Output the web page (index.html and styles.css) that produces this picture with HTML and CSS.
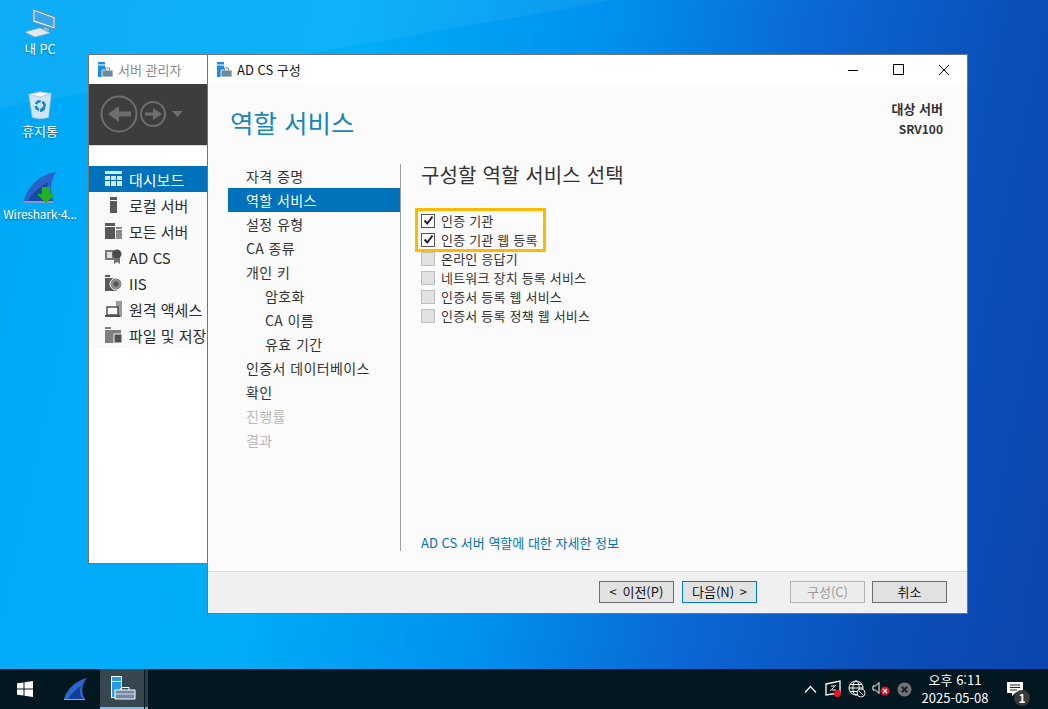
FILE: index.html
```html
<!DOCTYPE html>
<html lang="ko">
<head>
<meta charset="utf-8">
<title>AD CS 구성</title>
<link rel="stylesheet" href="styles.css">
</head>
<body>
<main class="desktop">
  <div class="desk-icon pc">
    <svg width="40" height="29" viewBox="0 0 40 29"><path d="M13 1 35 9 35 21 13 14Z" fill="#e8eef2" stroke="#7f8e9a"/><path d="M14.500 3 33.500 10 33.500 19 14.500 12.500Z" fill="#3aa6e8"/><path d="M24 19 29 21 29 23 24 22Z" fill="#aab4bc"/><path d="M5 24 20 20 30 25 15 29Z" fill="#e4e8ec" stroke="#a8b0b8" stroke-width=".7"/></svg>
    <span>내 PC</span>
  </div>
  <div class="desk-icon bin">
    <svg width="26" height="29" viewBox="0 0 30 34"><path d="M2 4 28 3 25 31Q15 34 6 31Z" fill="#cfe7f5" stroke="#a9c4d6"/><path d="M2 4 15 1 28 3 15 7Z" fill="#f2f8fc" stroke="#a9c4d6"/><path d="M15 12a5 5 0 1 0 5 6M15 23a5 5 0 0 0 0-11" fill="none" stroke="#1c84d0" stroke-width="3" stroke-dasharray="6 2"/></svg>
    <span>휴지통</span>
  </div>
  <div class="desk-icon ws">
    <svg width="34" height="34" viewBox="0 0 34 34"><path d="M1 30C5 14 18 3 33 1 27 10 27 22 31 30Z" fill="#2b62c8"/><path d="M5 30C10 21 18 15 25 11 23 19 25 25 29 30Z" fill="#174aa4"/><path d="M1 30H31L30 32H0Z" fill="#7e9cc4"/><path d="M19 16H27V23H32L23 32 14 23H19Z" fill="#1fb41f"/></svg>
    <span>Wireshark-4...</span>
  </div>

  <section class="server-window">
    <header class="sw-title">
      <svg class="app-mark" width="15" height="15" viewBox="0 0 15 15"><use href="#mark"/></svg>
      <span>서버 관리자</span>
    </header>
    <div class="sw-toolbar">
      <svg width="90" height="40" viewBox="0 0 90 40"><g fill="none" stroke="#6e6e6e" stroke-width="2"><circle cx="19" cy="19" r="17.500"/><circle cx="53" cy="19" r="12"/></g><path d="M31 16.500H19V11L8 19 19 27V21.500H31Z" fill="#6e6e6e"/><path d="M45 17.500H53V13L62 19 53 25V20.500H45Z" fill="#6e6e6e"/><path d="M72 16H83L77.500 22Z" fill="#6e6e6e"/></svg>
    </div>
    <nav class="sw-nav">
      <a class="sw-item on"><svg width="17" height="16" viewBox="0 0 17 16"><path d="M0 0H17V3H0ZM0 5H5V9H0ZM6 5H11V9H6ZM12 5H17V9H12ZM0 10H5V15H0ZM6 10H11V15H6ZM12 10H17V15H12Z" fill="#d6e8f6"/></svg><span>대시보드</span></a>
      <a class="sw-item"><svg width="17" height="16" viewBox="0 0 17 16"><path d="M5 0H12V3H5ZM5 4H12V16H5Z" fill="#595959"/></svg><span>로컬 서버</span></a>
      <a class="sw-item"><svg width="17" height="16" viewBox="0 0 17 16"><path d="M0 0H10V3H0ZM0 4H10V16H0Z" fill="#595959"/><path d="M11 4H17V6H11ZM11 7H17V16H11Z" fill="#8a8a8a"/></svg><span>모든 서버</span></a>
      <a class="sw-item"><svg width="17" height="16" viewBox="0 0 17 16"><path d="M0 1H9V11H0Z" fill="#777"/><path d="M2 3H7V9H2Z" fill="#ddd"/><circle cx="12" cy="5" r="4.500" fill="#4a4a4a"/><path d="M9 9V15L12 13 15 15V9Z" fill="#707070"/></svg><span>AD CS</span></a>
      <a class="sw-item"><svg width="17" height="16" viewBox="0 0 17 16"><path d="M0 0H5V2H0ZM0 3H12V16H0Z" fill="#595959"/><circle cx="11" cy="9" r="6" fill="#8a8a8a" stroke="#f8f8f8"/><circle cx="11" cy="9" r="2.500" fill="#555"/></svg><span>IIS</span></a>
      <a class="sw-item"><svg width="17" height="16" viewBox="0 0 17 16"><path d="M11 0H17V16H11Z" fill="#9a9a9a"/><path d="M2 6H13V14H2Z" fill="#fafafa" stroke="#4f4f4f" stroke-width="1.500"/><path d="M0 14H15V16H0Z" fill="#4f4f4f"/></svg><span>원격 액세스</span></a>
      <a class="sw-item"><svg width="17" height="16" viewBox="0 0 17 16"><path d="M0 0H6V2H0ZM0 3H16V16H0Z" fill="#808080"/><path d="M9 7H17V16H9Z" fill="#4f4f4f" stroke="#f8f8f8"/></svg><span>파일 및 저장소</span></a>
    </nav>
  </section>

  <section class="dialog">
    <header class="dlg-title">
      <svg class="app-mark" width="15" height="15" viewBox="0 0 15 15"><use href="#mark"/></svg>
      <span class="dlg-name">AD CS 구성</span>
      <div class="winctl">
        <svg width="12" height="12" viewBox="0 0 12 12"><path d="M0 6.500H10" stroke="#000"/></svg>
        <svg width="12" height="12" viewBox="0 0 12 12"><path d="M.5 .5H10.500V10.500H.5Z" fill="none" stroke="#000"/></svg>
        <svg width="12" height="12" viewBox="0 0 12 12"><path d="M1 1 11 11M11 1 1 11" stroke="#000"/></svg>
      </div>
    </header>
    <div class="dlg-body">
      <div class="dlg-head">
        <h1>역할 서비스</h1>
        <div class="target"><b>대상 서버</b><b class="latin">SRV100</b></div>
      </div>
      <div class="dlg-main">
        <nav class="steps">
          <a>자격 증명</a>
          <a class="on">역할 서비스</a>
          <a>설정 유형</a>
          <a>CA 종류</a>
          <a>개인 키</a>
          <a class="sub">암호화</a>
          <a class="sub">CA 이름</a>
          <a class="sub">유효 기간</a>
          <a>인증서 데이터베이스</a>
          <a>확인</a>
          <a class="off">진행률</a>
          <a class="off">결과</a>
        </nav>
        <div class="panel">
          <h2>구성할 역할 서비스 선택</h2>
          <div class="checks">
            <div class="highlight"></div>
            <label class="chk"><i class="box on"><svg width="11" height="11" viewBox="0 0 11 11"><path d="M1.500 5.500 4.300 8.500 9.500 1.500" fill="none" stroke="#222" stroke-width="2"/></svg></i>인증 기관</label>
            <label class="chk"><i class="box on"><svg width="11" height="11" viewBox="0 0 11 11"><path d="M1.500 5.500 4.300 8.500 9.500 1.500" fill="none" stroke="#222" stroke-width="2"/></svg></i>인증 기관 웹 등록</label>
            <label class="chk"><i class="box"></i>온라인 응답기</label>
            <label class="chk"><i class="box"></i>네트워크 장치 등록 서비스</label>
            <label class="chk"><i class="box"></i>인증서 등록 웹 서비스</label>
            <label class="chk"><i class="box"></i>인증서 등록 정책 웹 서비스</label>
          </div>
          <a class="more">AD CS 서버 역할에 대한 자세한 정보</a>
        </div>
      </div>
    </div>
    <footer class="dlg-foot">
      <button class="btn wide">&lt; 이전(P)</button>
      <button class="btn next wide">다음(N) &gt;</button>
      <button class="btn dis">구성(C)</button>
      <button class="btn">취소</button>
    </footer>
  </section>

  <footer class="taskbar">
    <div class="tb-start"><svg width="16" height="16" viewBox="0 0 16 16"><path d="M0 2.300 6.500 1.400V7.500H0ZM7.500 1.300 16 0V7.500H7.500ZM0 8.500H6.500V14.600L0 13.700ZM7.500 8.500H16V16L7.500 14.700Z" fill="#fff"/></svg></div>
    <div class="tb-app"><svg width="24" height="24" viewBox="0 0 24 24"><path d="M1 22C4 12 12 4 24 1 18 8 18 16 22 22Z" fill="#2c66cc"/><path d="M5 22C9 16 13 12 18 9 16 14 17 18 20 22Z" fill="#123f9a"/><path d="M1 22H22V23H1Z" fill="#8fa6c4"/></svg></div>
    <div class="tb-app active"><svg width="25" height="24" viewBox="0 0 25 24"><path d="M0 0H11V22H0Z" fill="#fff"/><path d="M1 1H10V5H1ZM1 6H10V21H1Z" fill="#2a9be8"/><path d="M4 14H24V23H4Z" fill="#6f8ba3" stroke="#fff"/><path d="M10 14V11.500H18V14" fill="none" stroke="#fff"/><path d="M4 18H24" stroke="#fff" stroke-width=".7"/></svg></div>
    <div class="tb-grip"></div>
    <div class="tb-tray">
      <svg class="t-chev" width="13" height="8" viewBox="0 0 13 8"><path d="M1 7.500 6.500 1.500 12 7.500" fill="none" stroke="#fff" stroke-width="1.200"/></svg>
      <svg width="17" height="18" viewBox="0 0 17 18"><path d="M1 4 15 1V13L1 15Z" fill="none" stroke="#fff" stroke-width="1.300"/><path d="M5 11 11 5M6 6H10M7 10H11" stroke="#fff"/><circle cx="12.500" cy="13.500" r="3.500" fill="#e81123"/></svg>
      <svg width="18" height="18" viewBox="0 0 18 18"><g fill="none" stroke="#fff"><circle cx="8" cy="8" r="7"/><ellipse cx="8" cy="8" rx="3.200" ry="7"/><path d="M1 8H15M2 4.500H14M2 11.500H14"/></g><circle cx="13" cy="13" r="4" fill="#0b1a24" stroke="#ddd"/><path d="M10.500 10.500 15.500 15.500" stroke="#ddd"/></svg>
      <svg width="19" height="18" viewBox="0 0 19 18"><path d="M1 6H3.500L7 2.500V13.500L3.500 10H1Z" fill="none" stroke="#fff"/><circle cx="13" cy="11" r="4.500" fill="#e81123"/><path d="M11 9 15 13M15 9 11 13" stroke="#fff" stroke-width="1.200"/></svg>
      <svg width="15" height="15" viewBox="0 0 15 15"><circle cx="7.500" cy="7.500" r="7" fill="#6f7478"/><path d="M4.800 4.800 10.200 10.200M10.200 4.800 4.800 10.200" stroke="#1a2228" stroke-width="2"/></svg>
    </div>
    <div class="tb-clock"><span>오후 6:11</span><span>2025-05-08</span></div>
    <div class="tb-notify">
      <svg width="17" height="15" viewBox="0 0 17 15"><path d="M0 0H16V11H8L5 14V11H0Z" fill="#fff"/><path d="M3 3H13M3 5.500H13M3 8H10" stroke="#222"/></svg>
      <em>1</em>
    </div>
  </footer>
</main>
<svg class="defs" width="0" height="0"><defs><g id="mark"><path d="M0 0H7V2.500H0Z" fill="#1b8ce0"/><path d="M0 3.500H7V15H0Z" fill="#1b8ce0"/><path d="M4 8H15V15H4Z" fill="#6b8aa0" stroke="#fff" stroke-width=".8"/><path d="M7.500 8V6H11.500V8" fill="none" stroke="#6b8aa0"/></g></defs></svg>
</body>
</html>
```
FILE: styles.css
```css
* { box-sizing: border-box; }
html, body { margin: 0; height: 100%; overflow: hidden; }
body { font-family: "Noto Sans CJK KR", "Noto Sans", sans-serif; font-size: 13px; color: #222; }
svg { flex: none; }
.defs { position: absolute; }
.desktop {
  position: relative; width: 1048px; height: 709px; overflow: hidden;
  background:
    linear-gradient(170deg, rgba(255,255,255,.05) 0 12%, transparent 12.2%),
    linear-gradient(102deg, #00a8f6 0%, #00aef8 30%, #0090ee 52%, #0a68d6 68%, #0b4fb8 85%, #0a45ac 100%);
}
.desk-icon { position: absolute; width: 80px; display: flex; flex-direction: column; align-items: center; color: #fff; line-height: 16px; font-size: 13px; }
.desk-icon span { margin-top: 3px; text-shadow: 0 1px 2px rgba(0,0,0,.35); white-space: nowrap; }
.pc { left: 0; top: 8px; font-size: 12.500px; }
.pc span { margin-top: 4px; }
.bin { left: 0; top: 91px; }
.ws { left: 0; top: 171px; font-size: 12px; }
.ws span { margin-top: 1px; letter-spacing: -.25px; }

.server-window { position: absolute; left: 88px; top: 54px; width: 130px; height: 510px; background: #fff; border: 1px solid #6f7579; }
.sw-title { height: 29px; display: flex; align-items: center; padding-left: 9px; gap: 5px; color: #8a8a8a; }
.sw-toolbar { height: 62px; background: #3d3d3d; border-bottom: 1px solid #d9d9d9; display: flex; align-items: center; padding-left: 11px; }
.sw-nav { margin-top: 20px; display: flex; flex-direction: column; }
.sw-item { height: 26px; display: flex; align-items: center; padding-left: 16px; gap: 7px; font-size: 15px; color: #2c2c2c; white-space: nowrap; background: #fafafa; }
.sw-item.on { background: #0072bc; color: #fff; }

.dialog { position: absolute; left: 207px; top: 54px; width: 761px; height: 560px; background: #fff; border: 1px solid #6f7579; display: flex; flex-direction: column; }
.dlg-title { height: 29px; flex: none; display: flex; align-items: center; padding-left: 9px; gap: 5px; }
.dlg-name { color: #111; }
.winctl { margin-left: auto; display: flex; gap: 33px; padding-right: 17px; }
.dlg-body { flex: 1; background: #fbfbfb; display: flex; flex-direction: column; min-height: 0; }
.dlg-head { height: 80px; flex: none; display: flex; justify-content: space-between; padding: 16px 24px 0 22px; }
h1 { margin: 0; font-size: 25.500px; font-weight: 400; color: #1a86b8; line-height: 44px; }
.target { display: flex; flex-direction: column; align-items: flex-end; line-height: 20px; color: #333; margin-top: -1px; }
.target b { font-weight: 700; font-size: 13px; }
.target .latin { font-size: 12px; }
.dlg-main { flex: 1; display: flex; min-height: 0; padding-left: 20px; padding-bottom: 20px; }
.steps { width: 172px; flex: none; display: flex; flex-direction: column; }
.steps a { height: 24px; line-height: 24px; padding-left: 18px; font-size: 14px; letter-spacing: .4px; color: #333; white-space: nowrap; }
.steps a.on { background: #0072bc; color: #fff; }
.steps a.sub { padding-left: 37px; }
.steps a.off { color: #b8b8b8; }
.panel { flex: 1; border-left: 1px solid #a0a0a0; padding-left: 20px; padding-right: 24px; display: flex; flex-direction: column; }
h2 { margin: 0; font-size: 20px; font-weight: 400; letter-spacing: .15px; color: #333; line-height: 22px; }
.checks { position: relative; margin-top: 25px; display: flex; flex-direction: column; }
.highlight { position: absolute; left: -6px; top: -3px; width: 131px; height: 44px; border: 3px solid #ffb900; pointer-events: none; }
.chk { height: 19px; display: flex; align-items: center; gap: 6px; font-size: 13px; letter-spacing: .2px; color: #333; white-space: nowrap; }
.box { width: 14px; height: 14px; flex: none; background: #e1e1e1; border: 1px solid #bdbdbd; display: flex; align-items: center; justify-content: center; }
.box.on { background: #fff; border-color: #555; }
.more { margin-top: auto; color: #0070b8; font-size: 13px; line-height: 16px; }
.dlg-foot { height: 42px; flex: none; background: #f0f0f0; border-top: 1px solid #dcdcdc; display: flex; align-items: flex-start; padding: 9px 20px 0 0; justify-content: flex-end; }
.btn { width: 75px; height: 22px; padding: 0; background: #e1e1e1; border: 1px solid #6e6e6e; font: inherit; font-size: 13px; line-height: 18px; color: #111; margin-left: 8px; }
.btn.wide { word-spacing: 2px; }
.btn.next { border-color: #0078d7; }
.btn.dis { margin-left: 33px; margin-right: 7px; background: #ececec; border-color: #b4b4b4; color: #9a9a9a; }
.btn.dis + .btn { margin-left: 0; }

.taskbar { position: absolute; left: 0; right: 0; bottom: 0; height: 40px; background: #02171f; display: flex; align-items: stretch; color: #fff; }
.tb-start { width: 50px; display: flex; align-items: center; justify-content: center; }
.tb-app { width: 50px; display: flex; align-items: center; justify-content: center; }
.tb-app.active { width: 44px; padding-left: 3px; background: #36474f; border-bottom: 2px solid #76b9ed; }
.tb-grip { width: 3px; margin-left: 1px; background: #2d3c43; border-bottom: 2px solid #6aa6d4; }
.tb-tray { margin-left: auto; display: flex; align-items: center; gap: 6px; padding-right: 3px; }
.t-chev { margin-right: 2px; }
.tb-clock { width: 80px; display: flex; flex-direction: column; align-items: center; justify-content: center; line-height: 18px; font-size: 13px; }
.tb-notify { position: relative; width: 53px; padding-right: 13px; display: flex; align-items: center; justify-content: center; }
.tb-notify em { position: absolute; right: 18px; bottom: 3px; width: 16px; height: 16px; border-radius: 50%; background: #3a3a3a; font-style: normal; font-size: 12px; line-height: 16px; text-align: center; font-weight: 700; }
```
